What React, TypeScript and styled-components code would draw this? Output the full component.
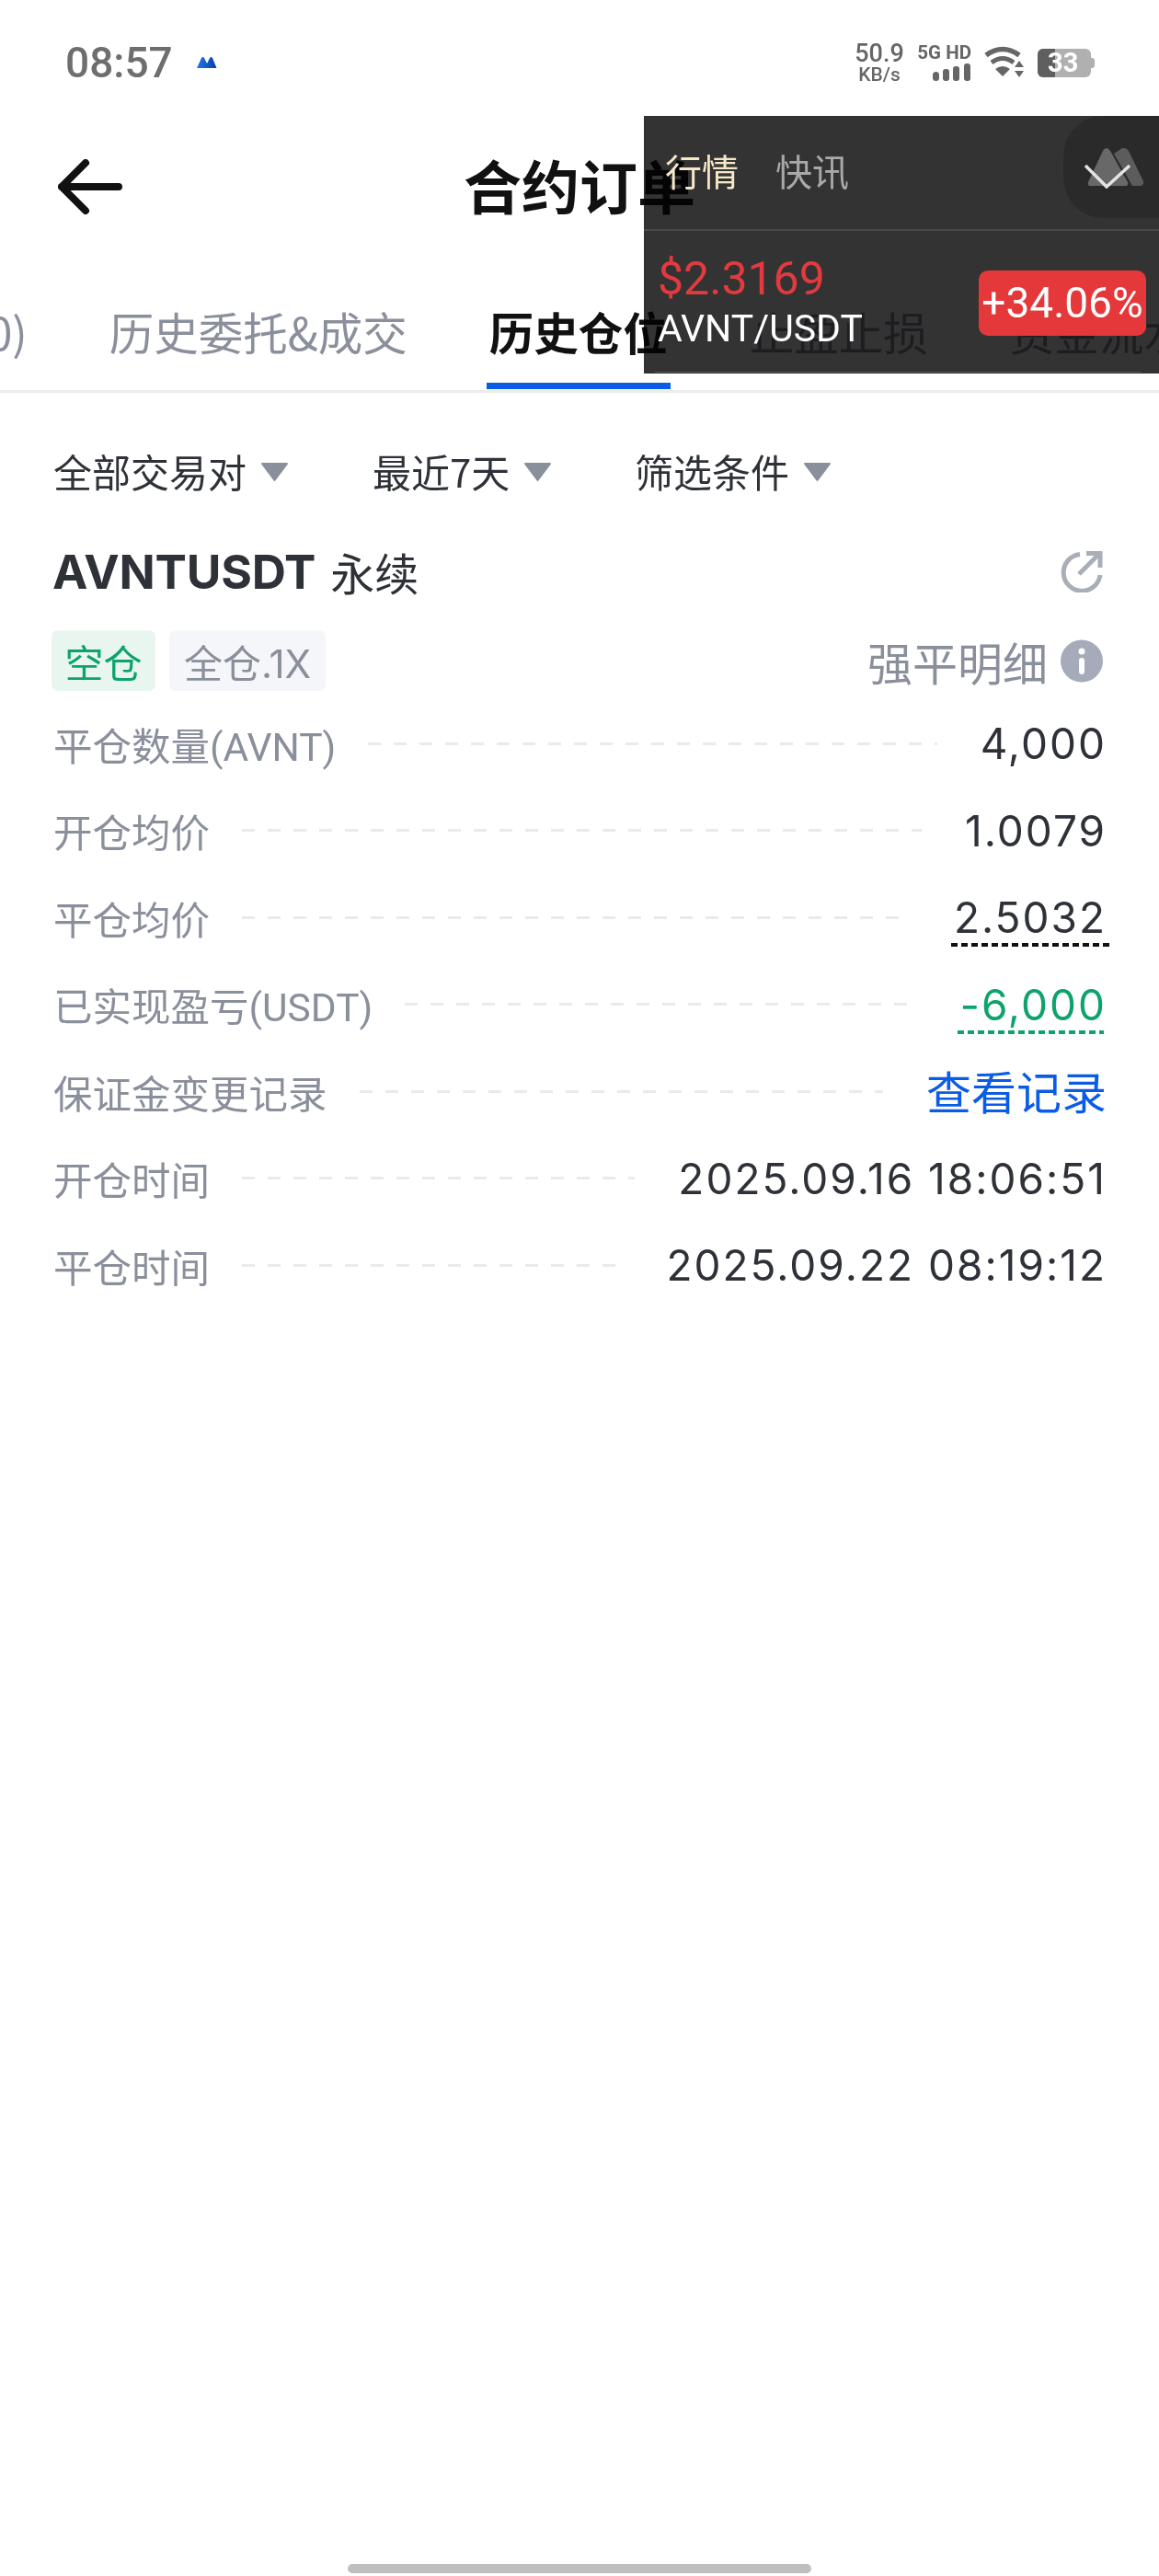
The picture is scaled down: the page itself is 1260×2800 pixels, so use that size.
import * as React from 'react';
import styled, { createGlobalStyle } from 'styled-components';

const CJK = '"Noto Sans CJK SC", sans-serif';
const LATIN = 'Inter, "Noto Sans CJK SC", sans-serif';

const GlobalStyle = createGlobalStyle`
	html, body {
		margin: 0;
		padding: 0;
		background: #fff;
	}
	* {
		box-sizing: border-box;
	}
`;

const Page = styled.div`
	position: relative;
	width: 1260px;
	height: 2800px;
	overflow: hidden;
	display: flex;
	flex-direction: column;
	background: #fff;
	font-family: ${CJK};
`;

const StatusBar = styled.div`
	height: 126px;
	padding: 10px 70px 0 71px;
	display: flex;
	align-items: center;
	color: #666;
`;

const Clock = styled.span`
	font-family: Roboto, sans-serif;
	font-size: 46px;
	font-weight: 500;
	color: #6e6e6e;
`;

const StatusRight = styled.div`
	margin-left: auto;
	display: flex;
	align-items: center;
	gap: 14px;
`;

const Speed = styled.div`
	width: 56px;
	display: flex;
	flex-direction: column;
	align-items: center;
	font-family: Roboto, sans-serif;
	font-weight: 500;
	line-height: 1;
	b {
		font-size: 27px;
		font-weight: 500;
	}
	span {
		font-size: 21px;
		margin-top: -1px;
	}
`;

const Cell = styled.div`
	width: 58px;
	display: flex;
	flex-direction: column;
	align-items: flex-end;
	gap: 3px;
	span {
		font-family: Roboto, sans-serif;
		font-size: 20.5px;
		font-weight: 700;
		line-height: 18px;
		white-space: nowrap;
	}
`;

const Battery = styled.div`
	position: relative;
	width: 62px;
	height: 31px;
	svg {
		display: block;
	}
	span {
		position: absolute;
		left: 11px;
		top: 0;
		font-family: Roboto, sans-serif;
		font-size: 29px;
		font-weight: 700;
		line-height: 31px;
		color: #fff;
	}
`;

const NavBar = styled.div`
	height: 154px;
	padding-left: 63px;
	display: flex;
	align-items: center;
	position: relative;
`;

const NavTitle = styled.h1`
	margin: 0 0 0 -70px;
	flex: 1;
	padding: 0 63px 8px 0;
	text-align: center;
	font-size: 63px;
	font-weight: 700;
	color: #111;
	line-height: 1;
`;

const Tabs = styled.div`
	height: 147px;
	padding-top: 50px;
	margin-left: -224px;
	display: flex;
	gap: 89px;
	border-bottom: 3px solid #eceded;
	width: 1500px;
	white-space: nowrap;
`;

const Tab = styled.div<{ $active?: boolean }>`
	position: relative;
	height: 60px;
	font-size: 48.5px;
	line-height: 60px;
	font-weight: ${p => (p.$active ? 700 : 400)};
	color: ${p => (p.$active ? '#111' : '#8a8f9c')};
	${p =>
		p.$active &&
		`&::after {
			content: '';
			position: absolute;
			left: -3px;
			right: -3px;
			top: 86px;
			height: 7px;
			background: #0a5ce6;
		}`}
`;

const Filters = styled.div`
	margin-top: 50px;
	height: 68px;
	padding-left: 58px;
	display: flex;
	align-items: center;
`;

const Filter = styled.div<{ $width: number }>`
	width: ${p => p.$width}px;
	display: flex;
	align-items: center;
	gap: 15px;
	font-size: 42px;
	color: #2e3238;
	svg {
		margin-top: 4px;
	}
`;

const ContractRow = styled.div`
	margin-top: 46px;
	height: 60px;
	padding: 0 61px 0 57px;
	display: flex;
	align-items: center;
	color: #2e3138;
`;

const Symbol = styled.span`
	font-family: ${LATIN};
	font-size: 51.5px;
	font-weight: 700;
	letter-spacing: -0.2px;
`;

const Perpetual = styled.span`
	margin-left: 16px;
	font-size: 48px;
`;

const ShareIcon = styled.svg`
	margin-left: auto;
`;

const BadgeRow = styled.div`
	margin-top: 34px;
	padding: 0 61px 0 56px;
	display: flex;
	align-items: center;
	gap: 15px;
`;

const Badge = styled.span<{ $green?: boolean }>`
	height: 66px;
	padding: 0 ${p => (p.$green ? 14.5 : 16)}px;
	display: flex;
	align-items: center;
	border-radius: 7px;
	font-size: 42px;
	font-family: ${LATIN};
	background: ${p => (p.$green ? '#e8f6ef' : '#f5f6f9')};
	color: ${p => (p.$green ? '#0ea36a' : '#8a8f9c')};
`;

const Liquidation = styled.div`
	margin-left: auto;
	display: flex;
	align-items: center;
	gap: 14px;
	font-size: 49px;
	line-height: 1;
	color: #8a8f9c;
`;

const InfoDot = styled.svg`
	display: block;
`;

const Rows = styled.div`
	margin-top: 10px;
	padding: 0 57px 0 58px;
`;

const Row = styled.div`
	height: 94.5px;
	display: flex;
	align-items: center;
`;

const Label = styled.span`
	font-family: Roboto, "Noto Sans CJK SC", sans-serif;
	font-size: 42.5px;
	color: #8a8f9c;
	white-space: nowrap;
`;

const Dashes = styled.div`
	flex: 1;
	height: 3px;
	margin: 0 47px 0 35px;
	background: repeating-linear-gradient(90deg, #e9eaec 0 14px, transparent 14px 28px);
`;

const Value = styled.span<{ $tone?: string; $dotted?: boolean }>`
	position: relative;
	font-family: ${LATIN};
	font-size: 46px;
	letter-spacing: 2px;
	white-space: nowrap;
	color: ${p => (p.$tone === 'green' ? '#0ea36a' : '#2e3238')};
	${p =>
		p.$dotted &&
		`&::after {
			content: '';
			position: absolute;
			left: -3px;
			right: ${p.$tone === 'green' ? '3px' : '-7px'};
			top: 56px;
			height: 4px;
			background: repeating-linear-gradient(90deg, ${p.$tone === 'green' ? '#0ea36a' : '#111'} 0 7px, transparent 7px 11px);
		}`}
`;

const LinkValue = styled.span`
	font-size: 49px;
	line-height: 1;
	margin-top: -4px;
	color: #0a5ce6;
	white-space: nowrap;
`;

const HomeBar = styled.div`
	margin: auto auto 3px;
	width: 504px;
	height: 10px;
	border-radius: 5px;
	background: #bfbfbf;
`;

/* floating market widget, sits over the page and darkens what lies below it */
const Widget = styled.div`
	position: absolute;
	left: 700px;
	top: 126px;
	width: 560px;
	height: 280px;
	&::before {
		content: '';
		position: absolute;
		inset: 0;
		background: #333;
		mix-blend-mode: multiply;
	}
`;

const WidgetHead = styled.div`
	position: relative;
	height: 125px;
	padding: 0 0 6px 23px;
	display: flex;
	align-items: center;
	gap: 40px;
	border-bottom: 2px solid #4a4a4a;
`;

const WidgetTab = styled.span<{ $active?: boolean }>`
	font-size: 40px;
	color: ${p => (p.$active ? '#f6e7c6' : '#a9a9a9')};
`;

const Collapse = styled.div`
	position: absolute;
	right: 0;
	top: 0;
	width: 104px;
	height: 111px;
	display: flex;
	align-items: center;
	padding-left: 22px;
	border-radius: 44px 0 0 44px;
	background: #2a2a2a;
`;

const WidgetBody = styled.div`
	position: relative;
	padding: 0 14px 0 15px;
	height: 155px;
	display: flex;
	align-items: center;
	justify-content: space-between;
	font-family: Roboto, sans-serif;
	&::after {
		content: '';
		position: absolute;
		left: 12px;
		right: 20px;
		bottom: 1px;
		height: 1px;
		background: #555;
	}
`;

const Quote = styled.div`
	display: flex;
	flex-direction: column;
`;

const Price = styled.span`
	font-size: 50px;
	line-height: 57px;
	color: #e23a3f;
`;

const Pair = styled.span`
	font-size: 41px;
	line-height: 50px;
	color: #fff;
`;

const Change = styled.span`
	width: 182px;
	height: 71px;
	margin-top: 2px;
	border-radius: 10px;
	background: #e5383b;
	color: #fff;
	font-size: 46px;
	line-height: 71px;
	text-align: center;
	white-space: nowrap;
`;

const Triangle = () => (
	<svg width="31" height="22" viewBox="0 0 31 22">
		<path d="M2 2h27L15.500 20z" fill="#8a8f9c" stroke="#8a8f9c" strokeWidth="2" strokeLinejoin="round" />
	</svg>
);

const rows: { label: string; value: string; tone?: string; dotted?: boolean; link?: boolean }[] = [
	{ label: '平仓数量(AVNT)', value: '4,000' },
	{ label: '开仓均价', value: '1.0079' },
	{ label: '平仓均价', value: '2.5032', dotted: true },
	{ label: '已实现盈亏(USDT)', value: '-6,000', tone: 'green', dotted: true },
	{ label: '保证金变更记录', value: '查看记录', link: true },
	{ label: '开仓时间', value: '2025.09.16 18:06:51' },
	{ label: '平仓时间', value: '2025.09.22 08:19:12' },
];

export default function App() {
	return (
		<>
			<GlobalStyle />
			<Page>
				<StatusBar>
					<Clock>08:57</Clock>
					<svg width="22" height="14" viewBox="0 0 22 14" style={{ marginLeft: 26 }}>
						<defs>
							<linearGradient id="mount" x1="0" x2="1">
								<stop offset="0" stopColor="#1a78e6" />
								<stop offset="1" stopColor="#0a3ea8" />
							</linearGradient>
						</defs>
						<path d="M0 13 L5 2 Q6.5 0 8 2 L11 8 L14 2 Q15.500 0 17 2 L21.500 13 Z" fill="url(#mount)" />
					</svg>
					<StatusRight>
						<Speed>
							<b>50.9</b>
							<span>KB/s</span>
						</Speed>
						<Cell>
							<span>5G HD</span>
							<svg width="42" height="19" viewBox="0 0 42 19" fill="#666">
								<rect x="0" y="9" width="7" height="10" rx="3.500" />
								<rect x="11" y="6" width="7" height="13" rx="3" />
								<rect x="22" y="3" width="7" height="16" rx="3" />
								<rect x="34" y="0" width="7" height="19" rx="3" />
							</svg>
						</Cell>
						<svg width="44" height="36" viewBox="0 0 44 36" fill="none" stroke="#666">
							<path d="M2 10 Q20 -3 38 10" strokeWidth="5.500" />
							<path d="M8 18 Q20 9 32 18" strokeWidth="5" />
							<path d="M20 33 L12 25 Q20 19 28 25 Z" fill="#666" stroke="none" />
							<path d="M38 16 L43 23 H33 Z M33 27 H43 L38 34 Z" fill="#666" stroke="none" />
						</svg>
						<Battery>
							<svg width="62" height="31" viewBox="0 0 62 31">
								<rect x="0" y="0" width="58" height="31" rx="6" fill="#b0b0b0" />
								<path d="M6 0H19V31H6a6 6 0 0 1-6-6V6a6 6 0 0 1 6-6z" fill="#5f5f5f" />
								<path d="M58 10h1a3 3 0 0 1 3 3v5a3 3 0 0 1-3 3h-1z" fill="#b0b0b0" />
							</svg>
							<span>33</span>
						</Battery>
					</StatusRight>
				</StatusBar>

				<NavBar>
					<svg width="70" height="60" viewBox="0 0 70 60" fill="none" stroke="#111" strokeWidth="8" strokeLinecap="round" strokeLinejoin="round">
						<path d="M66 30H4M30 4 4 30l26 26" />
					</svg>
					<NavTitle>合约订单</NavTitle>
				</NavBar>

				<Tabs>
					<Tab>当前委托(0)</Tab>
					<Tab>历史委托&amp;成交</Tab>
					<Tab $active>历史仓位</Tab>
					<Tab>止盈止损</Tab>
					<Tab>资金流水</Tab>
				</Tabs>

				<Filters>
					<Filter $width={347}>
						全部交易对
						<Triangle />
					</Filter>
					<Filter $width={285}>
						最近7天
						<Triangle />
					</Filter>
					<Filter $width={240}>
						筛选条件
						<Triangle />
					</Filter>
				</Filters>

				<ContractRow>
					<Symbol>AVNTUSDT</Symbol>
					<Perpetual>永续</Perpetual>
					<ShareIcon width="46" height="46" viewBox="0 0 46 46" fill="none" stroke="#a9aeb8" strokeWidth="5">
						<path d="M21 4.500A20 20 0 1 0 43 27" />
						<path d="M20 26 42 4" />
						<path d="M28 3.500H43V19" />
					</ShareIcon>
				</ContractRow>

				<BadgeRow>
					<Badge $green>空仓</Badge>
					<Badge>全仓.1X</Badge>
					<Liquidation>
						强平明细
						<InfoDot width="46" height="47" viewBox="0 0 46 47">
							<circle cx="23" cy="23.500" r="23" fill="#a5abb9" />
							<circle cx="23" cy="13" r="3.500" fill="#fff" />
							<rect x="20" y="20" width="6" height="18" rx="3" fill="#fff" />
						</InfoDot>
					</Liquidation>
				</BadgeRow>

				<Rows>
					{rows.map(r => (
						<Row key={r.label}>
							<Label>{r.label}</Label>
							<Dashes />
							{r.link ? (
								<LinkValue>{r.value}</LinkValue>
							) : (
								<Value $tone={r.tone} $dotted={r.dotted}>
									{r.value}
								</Value>
							)}
						</Row>
					))}
				</Rows>

				<HomeBar />

				<Widget>
					<WidgetHead>
						<WidgetTab $active>行情</WidgetTab>
						<WidgetTab>快讯</WidgetTab>
						<Collapse>
							<svg width="66" height="46" viewBox="0 0 66 46">
								<path d="M5 39 L21 5 Q25 -1 29 5 L48 39 Q49 43 45 43 H8 Q4 43 5 39Z" fill="#686868" />
								<path d="M33 8 L39 4 Q44 -1 49 5 L65 38 Q66 43 61 43 H53 Z" fill="#5c5c5c" />
								<path d="M2 21 L25 44 L50 21" fill="none" stroke="#e4e4e4" strokeWidth="3.500" />
							</svg>
						</Collapse>
					</WidgetHead>
					<WidgetBody>
						<Quote>
							<Price>$2.3169</Price>
							<Pair>AVNT/USDT</Pair>
						</Quote>
						<Change>+34.06%</Change>
					</WidgetBody>
				</Widget>
			</Page>
		</>
	);
}
